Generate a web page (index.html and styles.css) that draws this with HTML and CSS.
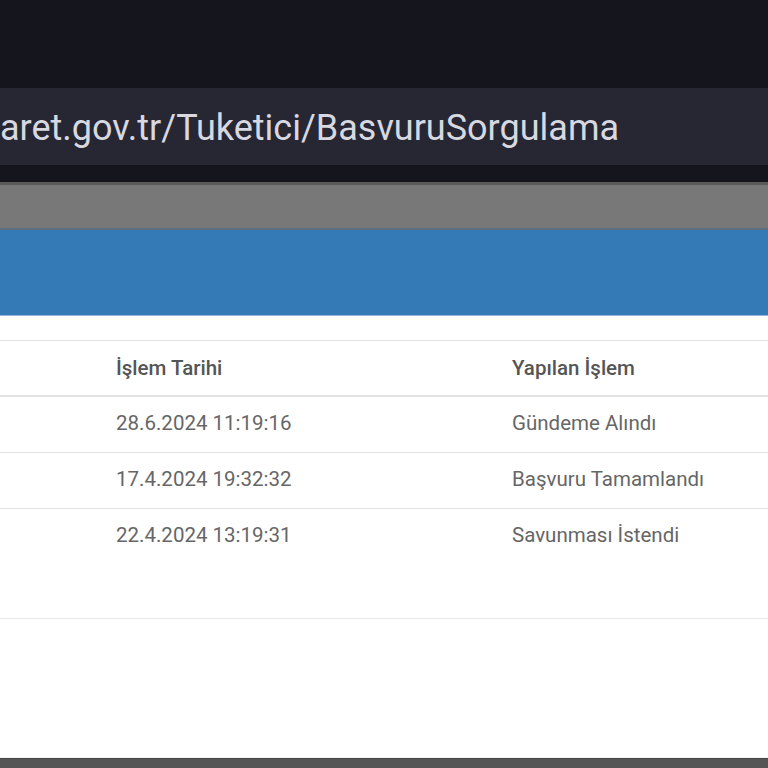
FILE: index.html
```html
<!DOCTYPE html>
<html lang="tr">
<head>
<meta charset="utf-8">
<link rel="stylesheet" href="styles.css">
</head>
<body>
<div class="status"></div>
<div class="urlbar"><span class="url">aret.gov.tr/Tuketici/BasvuruSorgulama</span></div>
<div class="gap"></div>
<div class="toolbar"></div>
<div class="banner"></div>
<div class="content">
  <div class="table">
    <div class="row head">
      <div class="cell c1"></div>
      <div class="cell c2">İşlem Tarihi</div>
      <div class="cell c3">Yapılan İşlem</div>
    </div>
    <div class="row">
      <div class="cell c1"></div>
      <div class="cell c2">28.6.2024 11:19:16</div>
      <div class="cell c3">Gündeme Alındı</div>
    </div>
    <div class="row">
      <div class="cell c1"></div>
      <div class="cell c2">17.4.2024 19:32:32</div>
      <div class="cell c3">Başvuru Tamamlandı</div>
    </div>
    <div class="row">
      <div class="cell c1"></div>
      <div class="cell c2">22.4.2024 13:19:31</div>
      <div class="cell c3">Savunması İstendi</div>
    </div>
  </div>
  <div class="spacer"></div>
  <div class="lower"></div>
</div>
<div class="bottombar"></div>
</body>
</html>
```
FILE: styles.css
```css
html, body {
  margin: 0;
  padding: 0;
  background: #ffffff;
  font-family: Roboto, "Liberation Sans", sans-serif;
}
.status {
  height: 88px;
  background: #15151d;
}
.urlbar {
  height: 77px;
  background: #262733;
  display: flex;
  align-items: center;
  overflow: hidden;
  white-space: nowrap;
}
.url {
  color: #d8d8e0;
  font-size: 36px;
  margin-left: 0;
  margin-top: 2px;
}
.gap {
  height: 17px;
  background: #15151d;
}
.toolbar {
  height: 43px;
  background: #787878;
  border-top: 3px solid #5a5a5a;
  border-bottom: 2px solid #5f6f80;
}
.banner {
  height: 85px;
  background: #337ab7;
  border-bottom: 1px solid #94b8db;
}
.content {
  padding-top: 24px;
  background: #ffffff;
}
.table {
  border-top: 1px solid #e2e2e2;
}
.row {
  display: grid;
  grid-template-columns: 116px 396px 1fr;
  box-sizing: border-box;
  height: 56px;
  padding-bottom: 4px;
  border-bottom: 1px solid #e2e2e2;
  align-items: center;
  color: #666666;
  font-size: 20.5px;
}
.row.head {
  height: 56px;
  padding-bottom: 0;
  border-bottom: 2px solid #e2e2e2;
  font-weight: 500;
  color: #555555;
}
.row:last-child {
  border-bottom: none;
  height: 55px;
}
.cell {
  white-space: nowrap;
}
.spacer {
  height: 54px;
  border-bottom: 1px solid #e8e8e8;
}
.lower {
  height: 138px;
  border-bottom: 1px solid #f2f2f2;
}
.bottombar {
  height: 10px;
  background: #555555;
  border-top: 1px solid #444;
}
```
